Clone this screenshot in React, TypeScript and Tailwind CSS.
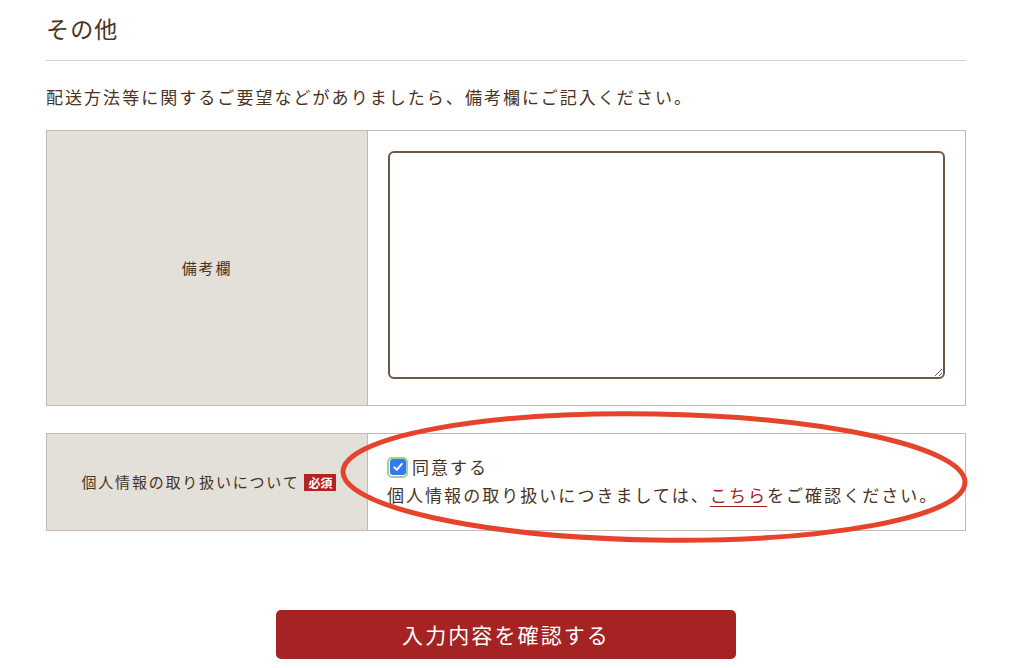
export default function App() {
  return (
    <div className="relative w-[1024px] h-[668px] overflow-hidden bg-white text-[#4a3322] font-['Noto_Sans_CJK_JP','Noto_Sans',sans-serif]">
      <div className="ml-[46px] w-[920px]">
        <h2 className="pt-[11px] pb-[15px] text-[23px] leading-[34px] tracking-[0.05em] font-normal border-b border-[#d0d0d0]">
          その他
        </h2>
        <p className="mt-[22px] text-[17px] leading-[28px] tracking-[0.12em]">
          配送方法等に関するご要望などがありましたら、備考欄にご記入ください。
        </p>

        <div className="mt-[19px] flex border border-[#c2bab3]">
          <div className="w-[321px] shrink-0 bg-[#e3dfd9] border-r border-[#c2bab3] flex items-center justify-center text-[15px] tracking-[0.12em]">
            備考欄
          </div>
          <div className="flex-1 pt-[20px] pb-[26px] px-[20px]">
            <textarea className="block w-[557px] h-[228px] rounded-[6px] border-2 border-[#6d5846] bg-white outline-none" />
          </div>
        </div>

        <div className="mt-[27px] flex border border-[#c2bab3]">
          <div className="w-[321px] shrink-0 bg-[#e3dfd9] border-r border-[#c2bab3] flex items-center justify-center gap-[5px] pl-[4px] text-[15px] tracking-[0.12em]">
            <span>個人情報の取り扱いについて</span>
            <span className="bg-[#b3231f] text-white text-[12px] leading-[17px] px-[4px] tracking-normal font-bold">必須</span>
          </div>
          <div className="flex-1 pt-[19px] pb-[21px] px-[19px] text-[17px] leading-[28px] tracking-[0.12em]">
            <label className="flex items-center gap-[4px]">
              <span className="flex items-center justify-center w-[21px] h-[21px] rounded-[5px] border-2 border-[#9fd08e]">
                <span className="flex items-center justify-center w-[16px] h-[16px] rounded-[3px] bg-[#3478f6]">
                  <svg viewBox="0 0 12 12" className="w-[12px] h-[12px]">
                    <path d="M2.2 6.3 L4.8 8.8 L9.8 2.8" fill="none" stroke="white" strokeWidth="1.9" strokeLinecap="round" strokeLinejoin="round" />
                  </svg>
                </span>
              </span>
              <span>同意する</span>
            </label>
            <p>
              個人情報の取り扱いにつきましては、
              <a className="text-[#a52323] underline underline-offset-[4px]">こちら</a>
              をご確認ください。
            </p>
          </div>
        </div>

        <div className="mt-[79px] flex justify-center">
          <button className="w-[460px] h-[49px] rounded-[5px] bg-[#a52323] text-white text-[21px] tracking-[0.1em]">
            入力内容を確認する
          </button>
        </div>
      </div>

      {/* annotation circle */}
      <svg className="absolute left-0 top-0 pointer-events-none" width="1024" height="668">
        <ellipse cx="654" cy="477" rx="311" ry="63" fill="none" stroke="#e5432b" strokeWidth="5" transform="rotate(1 654 477)" />
      </svg>
    </div>
  )
}
